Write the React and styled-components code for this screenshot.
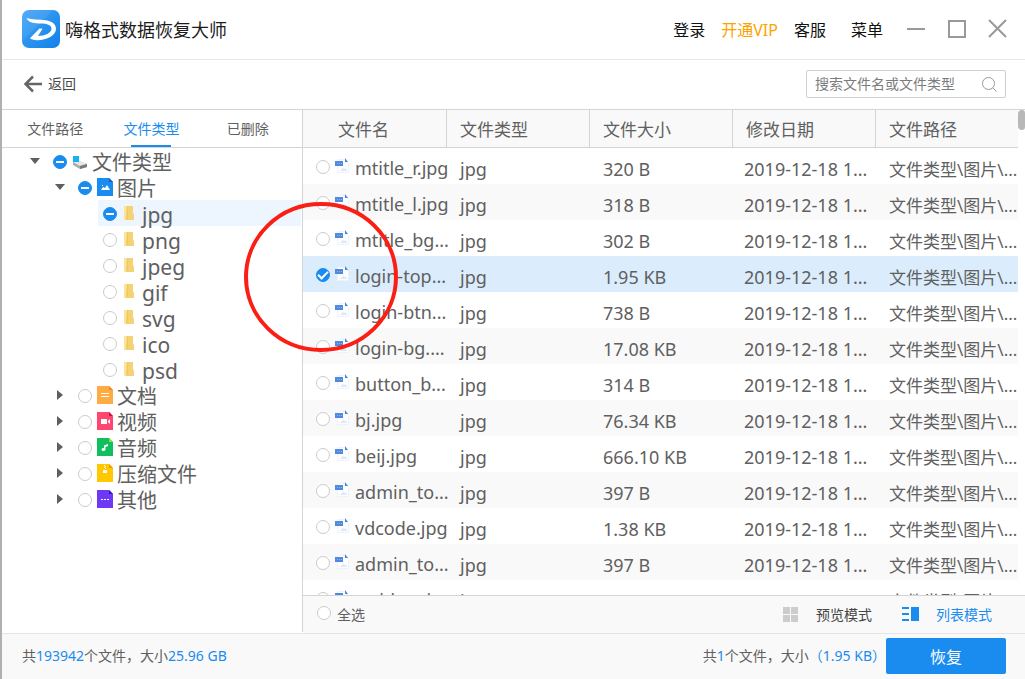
import React, { useEffect, useRef, useState } from "react";
import styled, { createGlobalStyle, css } from "styled-components";

const BLUE = "#1a8cf0";
const LINE = "#d4d4d4";

const GlobalStyle = createGlobalStyle`
  * { box-sizing: border-box; }
  body {
    margin: 0;
    background: #fff;
    color: #606060;
    font-family: "Noto Sans", "Noto Sans CJK SC", sans-serif;
    font-size: 14px;
  }
  button, input { font: inherit; color: inherit; }
  button { padding: 0; border: 0; background: none; cursor: pointer; }
  ul { list-style: none; margin: 0; padding: 0; }
`;

const Window = styled.div`
  position: relative;
  display: flex;
  flex-direction: column;
  height: 100vh;
  border-left: 2px solid #b0b0b0;
  overflow: hidden;
`;

const TitleBar = styled.header`
  display: flex;
  align-items: center;
  flex: none;
  height: 60px;
  padding: 0 17px 1px 20px;
  border-bottom: 1px solid #e6e6e6;
`;

const AppName = styled.h1`
  flex: 1;
  margin: 0 0 0 5px;
  padding-top: 1px;
  color: #1c1c1c;
  font-size: 18px;
  font-weight: 400;
  line-height: 24px;
`;

const MainNav = styled.nav`
  display: flex;
  gap: 16px;
  margin-right: 23px;
  padding-top: 1px;
`;

const NavLink = styled.a`
  color: ${(p) => (p.$vip ? "#ffa200" : "#111")};
  font-size: 16px;
  line-height: 24px;
  text-decoration: none;
  &:last-child { margin-left: 9px; }
`;

const WindowButtons = styled.div`
  display: flex;
  gap: 21px;
`;

const WindowButton = styled.button`
  display: flex;
  width: 20px;
  height: 20px;
`;

const Toolbar = styled.div`
  display: flex;
  align-items: center;
  justify-content: space-between;
  flex: none;
  height: 50px;
  padding: 0 19px 1px 21px;
  border-bottom: 1px solid ${LINE};
`;

const BackButton = styled.button`
  display: flex;
  align-items: center;
  gap: 5px;
  color: #4a4a4a;
  line-height: 20px;
`;

const SearchBox = styled.label`
  display: flex;
  align-items: center;
  width: 200px;
  height: 28px;
  padding: 0 8px;
  border: 1px solid #cfcfcf;
  border-radius: 2px;
`;

const SearchInput = styled.input`
  flex: 1;
  min-width: 0;
  padding: 0;
  border: 0;
  outline: 0;
  background: none;
  line-height: 20px;
  &::placeholder { color: #7c7c7c; opacity: 1; }
`;

const Body = styled.div`
  display: flex;
  flex: 1;
  min-height: 0;
`;

const Sidebar = styled.aside`
  flex: none;
  width: 301px;
  border-right: 1px solid ${LINE};
  margin-bottom: 1px;
`;

const Tabs = styled.div`
  display: flex;
  height: 38px;
  padding: 0 6px 0 5px;
  border-bottom: 1px solid ${LINE};
`;

const Tab = styled.button`
  display: flex;
  flex-direction: column;
  align-items: center;
  justify-content: space-between;
  flex: 1;
  padding-top: 8px;
  line-height: 22px;
  color: ${(p) => (p.$active ? BLUE : "inherit")};
  &::after {
    content: "";
    width: 40px;
    height: 2px;
    background: ${(p) => (p.$active ? BLUE : "transparent")};
  }
`;

const TreeRow = styled.div`
  display: flex;
  align-items: center;
  height: 26px;
  margin-left: ${(p) => p.$indent}px;
  margin-right: 1px;
  background: ${(p) => (p.$active ? "#edf6fe" : "transparent")};
`;

const Toggle = styled.button`
  display: flex;
  justify-content: center;
  width: 16px;
  margin-right: 5px;
`;

const TreeLabel = styled.label`
  display: flex;
  align-items: center;
  height: 26px;
  padding-top: 2px;
  padding-left: 5px;
`;

const TreeIcon = styled.span`
  display: flex;
  justify-content: center;
  width: 16px;
  margin: 0 4px 2px 5px;
`;

const TreeText = styled.span`
  padding-top: 2px;
  font-size: ${(p) => (p.$leaf ? 21 : 20)}px;
  line-height: 26px;
`;

const markFilled = css`
  border-color: ${BLUE};
  background: ${BLUE};
`;

const Check = styled.input`
  appearance: none;
  display: flex;
  align-items: center;
  justify-content: center;
  flex: none;
  width: 14px;
  height: 14px;
  margin: 0;
  border: 1px solid #cbcbcb;
  border-radius: 50%;
  background: #fff;
  &:checked, &:indeterminate { ${markFilled} }
  &:indeterminate::before {
    content: "";
    width: 8px;
    height: 2px;
    background: #fff;
  }
  &:checked:not(:indeterminate)::before {
    content: "";
    width: 8px;
    height: 4px;
    margin-bottom: 2px;
    border: solid #fff;
    border-width: 0 0 2px 2px;
    transform: rotate(-45deg);
  }
`;

const Content = styled.main`
  display: flex;
  flex-direction: column;
  flex: 1;
  min-width: 0;
`;

const TableArea = styled.div`
  display: flex;
  flex: 1;
  min-height: 0;
  overflow: hidden;
`;

const FileTable = styled.table`
  flex: 1;
  align-self: flex-start;
  table-layout: fixed;
  width: 100%;
  border-spacing: 0;
`;

const HeadCell = styled.th`
  height: 38px;
  padding: 2px 0 0 13px;
  border-left: 1px solid ${LINE};
  border-bottom: 1px solid ${LINE};
  background: #f9f9f9;
  font-size: 17px;
  font-weight: 400;
  line-height: 24px;
  text-align: left;
  white-space: nowrap;
  &:first-child { border-left: 0; padding-left: 35px; }
`;

const FileRow = styled.tr`
  height: 36px;
  background: ${(p) => (p.$selected ? "#dbedfc" : "#fff")};
  &:nth-child(even) { background: ${(p) => (p.$selected ? "#dbedfc" : "#f9f9f9")}; }
`;

const Cell = styled.td`
  height: 36px;
  padding: ${(p) => (p.$cjk ? 8 : 6)}px 0 0 ${(p) => p.$inset || 14}px;
  font-size: ${(p) => (p.$cjk ? 17 : 18)}px;
  line-height: 26px;
  white-space: nowrap;
`;

const NameCell = styled.td`
  padding: 0 0 0 13px;
`;

const NameLabel = styled.label`
  display: flex;
  align-items: center;
  height: 36px;
  padding-top: 2px;
  font-size: 18px;
  white-space: nowrap;
`;

const NameIcon = styled.span`
  display: flex;
  margin: 0 5px 2px 5px;
`;

const NameText = styled.span`
  padding-top: 2px;
  line-height: 26px;
`;

const ScrollTrack = styled.div`
  flex: none;
  width: 7px;
`;

const ScrollThumb = styled.div`
  height: 20px;
  border-radius: 4px 3px 3px 4px;
  background: #b8b8b8;
`;

const SelectBar = styled.div`
  display: flex;
  align-items: center;
  flex: none;
  height: 38px;
  padding: 0 33px 0 14px;
  border-top: 1px solid ${LINE};
  background: #f9f9f9;
`;

const SelectAll = styled.label`
  display: flex;
  align-items: center;
  gap: 6px;
  flex: 1;
  line-height: 22px;
  & > input { margin-bottom: 3px; }
`;

const ModeButton = styled.button`
  display: flex;
  align-items: center;
  gap: 17px;
  margin-left: 30px;
  line-height: 22px;
  color: ${(p) => (p.$active ? BLUE : "#444")};
`;

const Footer = styled.footer`
  display: flex;
  align-items: center;
  flex: none;
  height: 46px;
  padding: 0 19px 1px 20px;
  border-top: 1px solid #e4e4e4;
  background: #f9f9f9;
`;

const Summary = styled.p`
  flex: ${(p) => (p.$grow ? 1 : "none")};
  margin: 0;
  line-height: 22px;
`;

const Num = styled.span`
  color: ${BLUE};
`;

const RecoverButton = styled.button`
  width: 120px;
  height: 36px;
  border-radius: 2px;
  background: ${BLUE};
  color: #fff;
  font-size: 16px;
`;

const Marker = styled.svg`
  position: absolute;
  left: 242px;
  top: 201px;
  pointer-events: none;
`;

const Logo = () => (
  <svg width="38" height="38" viewBox="0 0 38 38" aria-hidden="true">
    <defs>
      <linearGradient id="logo" x1="0" y1="0" x2="1" y2="1">
        <stop offset="0" stopColor="#45a5f5" />
        <stop offset="1" stopColor="#0f80ea" />
      </linearGradient>
    </defs>
    <rect width="38" height="38" rx="7" fill="url(#logo)" />
    <path d="M0 31 31 0H7a7 7 0 0 0-7 7Z" fill="#fff" opacity=".08" />
    <path
      d="M4.500 8C10 9.800 17 9.300 24 10.200C30.500 11.200 34 14.500 34 18.800C34 25.500 25 30.300 15 30.200C11.500 30 8.800 29.200 8 28.300L17.500 18.500L20.500 18.800L16 26C23 26 29.500 23 29.500 18.500C29.500 15 25 13.400 19 13.400C14 13.400 6.500 13.500 4.500 8Z"
      fill="#fff"
    />
  </svg>
);

const Caret = ({ open }) => (
  <svg width="12" height="12" viewBox="0 0 12 12" aria-hidden="true">
    <path d={open ? "M1 3h10L6 9Z" : "M3 1v10l6-5Z"} fill="#5f5f5f" />
  </svg>
);

const Drive = () => (
  <svg width="16" height="16" viewBox="0 0 16 16" aria-hidden="true">
    <path d="m1 9 6-1 8 3v3l-7 2-7-4Z" fill="#a9abad" />
    <path d="m1 9 6-1 8 3-7 2Z" fill="#e4e6e8" />
    <path d="m8 13 7-2v3l-7 2Z" fill="#77797b" />
    <rect x="1" y="3" width="6" height="6" fill="#14b4ee" />
  </svg>
);

const Folder = () => (
  <svg width="12" height="16" viewBox="0 0 12 16" aria-hidden="true">
    <path d="M0 1h3v14H0Z" fill="#fbe39a" />
    <path d="M3 1h6v7l1 2v5H2l1-2Z" fill="#f5d273" />
    <path d="M3 1h1v12l-2 2Z" fill="#f0c860" />
  </svg>
);

const glyphs = {
  image: <path d="m4 12 2-3 2 1 2-3 3 5ZM5 7h1v1H5Z" fill="#fff" />,
  doc: <path d="M4 7h8v1H4Zm0 3h8v1H4Z" fill="#fff" />,
  video: <path d="M4 7h6v5H4Zm7 2 2-2v5l-2-2Z" fill="#fff" />,
  audio: <path d="M7 7.500 11 6v2L8.500 9v2.500A2 1.500 0 1 1 7 10Z" fill="#fff" />,
  zip: <path d="M7 1h1v1H7Zm1 1h1v1H8ZM7 3h1v1H7Zm1 1h1v1H8ZM6 6h4v3H6Z" fill="#fff" />,
  other: <path d="M4 9h2v1H4Zm3 0h2v1H7Zm3 0h2v1h-2Z" fill="#fff" />,
};

const TypeIcon = ({ kind, color, fold }) => (
  <svg width="16" height="18" viewBox="0 0 16 18" aria-hidden="true">
    <path d="M0 0h12l4 4v14H0Z" fill={color} />
    <path d="M12 0v4h4Z" fill={fold} />
    {glyphs[kind]}
  </svg>
);

const JpgIcon = () => (
  <svg width="15" height="18" viewBox="0 0 15 18" aria-hidden="true">
    <path d="M2.500 2.500h7l4 4v9h-11Z" fill="#fdfeff" stroke="#eef3fa" />
    <path d="M10 1v4h3Z" fill="#4a86e0" />
    <path d="M5 14l3-3 2 1 1-1 1 3Z" fill="#dce9fa" />
    <rect x="0" y="4" width="8" height="5" fill="#5089e0" />
    <path d="M2 6h1v1H2Zm2 0h1v1H4Zm2 0h1v1H6Z" fill="#8fb2ee" />
  </svg>
);

function TriCheck({ state, ...rest }) {
  const ref = useRef(null);
  useEffect(() => {
    ref.current.indeterminate = state === "some";
  }, [state]);
  return <Check ref={ref} type="checkbox" defaultChecked={state === "all"} {...rest} />;
}

const formats = ["jpg", "png", "jpeg", "gif", "svg", "ico", "psd"];

const categories = [
  { name: "文档", kind: "doc", color: "#ffab44", fold: "#f08a1c" },
  { name: "视频", kind: "video", color: "#ff4570", fold: "#c8104a" },
  { name: "音频", kind: "audio", color: "#10c060", fold: "#8ae02c" },
  { name: "压缩文件", kind: "zip", color: "#ffc800", fold: "#f09a00" },
  { name: "其他", kind: "other", color: "#6e38f4", fold: "#3c10b8" },
];

const files = [
  ["mtitle_r.jpg", "320 B"],
  ["mtitle_l.jpg", "318 B"],
  ["mtitle_bg...", "302 B"],
  ["login-top...", "1.95 KB"],
  ["login-btn...", "738 B"],
  ["login-bg....", "17.08 KB"],
  ["button_b...", "314 B"],
  ["bj.jpg", "76.34 KB"],
  ["beij.jpg", "666.10 KB"],
  ["admin_to...", "397 B"],
  ["vdcode.jpg", "1.38 KB"],
  ["admin_to...", "397 B"],
  ["weidenei...", "397 B"],
];

const columns = ["文件名", "文件类型", "文件大小", "修改日期", "文件路径"];

function TreeItem({ indent, open, toggle, state, icon, text, leaf, active }) {
  return (
    <TreeRow $indent={indent} $active={active}>
      {toggle && (
        <Toggle type="button" aria-label={`${open ? "收起" : "展开"}${text}`}>
          <Caret open={open} />
        </Toggle>
      )}
      <TreeLabel>
        <TriCheck state={state} />
        <TreeIcon>{icon}</TreeIcon>
        <TreeText $leaf={leaf}>{text}</TreeText>
      </TreeLabel>
    </TreeRow>
  );
}

export default function App() {
  const [selected, setSelected] = useState(() => new Set([3]));
  const flip = (i) =>
    setSelected((prev) => {
      const next = new Set(prev);
      next.has(i) ? next.delete(i) : next.add(i);
      return next;
    });

  return (
    <Window>
      <GlobalStyle />
      <TitleBar>
        <Logo />
        <AppName>嗨格式数据恢复大师</AppName>
        <MainNav>
          <NavLink href="#login">登录</NavLink>
          <NavLink href="#vip" $vip>开通VIP</NavLink>
          <NavLink href="#service">客服</NavLink>
          <NavLink href="#menu">菜单</NavLink>
        </MainNav>
        <WindowButtons>
          <WindowButton type="button" aria-label="最小化">
            <svg width="20" height="20"><path d="M1 10h18" stroke="#999" strokeWidth="2" /></svg>
          </WindowButton>
          <WindowButton type="button" aria-label="最大化">
            <svg width="20" height="20"><path d="M2 2h16v16H2Z" fill="none" stroke="#999" strokeWidth="2" /></svg>
          </WindowButton>
          <WindowButton type="button" aria-label="关闭">
            <svg width="20" height="20"><path d="m1 1 17 17M18 1 1 18" stroke="#999" strokeWidth="2" /></svg>
          </WindowButton>
        </WindowButtons>
      </TitleBar>

      <Toolbar>
        <BackButton type="button">
          <svg width="20" height="18" viewBox="0 0 20 18" aria-hidden="true">
            <path d="M19 9H3M10 1.500 2.500 9l7.500 7.500" fill="none" stroke="#666" strokeWidth="2.500" />
          </svg>
          返回
        </BackButton>
        <SearchBox>
          <SearchInput type="text" placeholder="搜索文件名或文件类型" aria-label="搜索" />
          <svg width="15" height="15" viewBox="0 0 15 15" aria-hidden="true">
            <circle cx="6.500" cy="6.500" r="6" fill="none" stroke="#999" />
            <path d="m11 11 3.500 3.500" stroke="#999" />
          </svg>
        </SearchBox>
      </Toolbar>

      <Body>
        <Sidebar>
          <Tabs>
            <Tab type="button">文件路径</Tab>
            <Tab type="button" $active>文件类型</Tab>
            <Tab type="button">已删除</Tab>
          </Tabs>
          <ul>
            <li>
              <TreeItem indent={25} toggle open state="some" icon={<Drive />} text="文件类型" />
              <ul>
                <li>
                  <TreeItem
                    indent={50}
                    toggle
                    open
                    state="some"
                    icon={<TypeIcon kind="image" color={BLUE} fold="#0f62b8" />}
                    text="图片"
                  />
                  <ul>
                    {formats.map((name, i) => (
                      <li key={name}>
                        <TreeItem
                          indent={96}
                          leaf
                          active={i === 0}
                          state={i === 0 ? "some" : "none"}
                          icon={<Folder />}
                          text={name}
                        />
                      </li>
                    ))}
                  </ul>
                </li>
                {categories.map((c) => (
                  <li key={c.name}>
                    <TreeItem indent={50} toggle state="none" icon={<TypeIcon {...c} />} text={c.name} />
                  </li>
                ))}
              </ul>
            </li>
          </ul>
        </Sidebar>

        <Content>
          <TableArea>
            <FileTable>
              <thead>
                <tr>
                  {columns.map((c) => (
                    <HeadCell key={c} scope="col">{c}</HeadCell>
                  ))}
                </tr>
              </thead>
              <tbody>
                {files.map(([name, size], i) => (
                  <FileRow key={i} $selected={selected.has(i)}>
                    <NameCell>
                      <NameLabel>
                        <Check type="checkbox" checked={selected.has(i)} onChange={() => flip(i)} />
                        <NameIcon><JpgIcon /></NameIcon>
                        <NameText>{name}</NameText>
                      </NameLabel>
                    </NameCell>
                    <Cell>jpg</Cell>
                    <Cell>{size}</Cell>
                    <Cell $inset={12}>2019-12-18 1...</Cell>
                    <Cell $cjk>文件类型\图片\...</Cell>
                  </FileRow>
                ))}
              </tbody>
            </FileTable>
            <ScrollTrack><ScrollThumb /></ScrollTrack>
          </TableArea>
          <SelectBar>
            <SelectAll>
              <Check type="checkbox" />
              全选
            </SelectAll>
            <ModeButton type="button">
              <svg width="16" height="16" aria-hidden="true">
                <path d="M0 0h7v7H0ZM8 0h7v7H8ZM0 8h7v7H0ZM8 8h7v7H8Z" fill="#ccc" />
              </svg>
              预览模式
            </ModeButton>
            <ModeButton type="button" $active>
              <svg width="17" height="16" aria-hidden="true">
                <path d="M0 0h7v2H0ZM0 6h7v2H0ZM0 12h7v2H0ZM9 0h8v14H9Z" fill={BLUE} />
              </svg>
              列表模式
            </ModeButton>
          </SelectBar>
        </Content>
      </Body>

      <Footer>
        <Summary $grow>
          共<Num>193942</Num>个文件，大小<Num>25.96 GB</Num>
        </Summary>
        <Summary>
          共<Num>1</Num>个文件，大小<Num>（1.95 KB）</Num>
        </Summary>
        <RecoverButton type="button">恢复</RecoverButton>
      </Footer>

      <Marker width="154" height="152" viewBox="0 0 154 152" aria-hidden="true">
        <ellipse cx="77" cy="76" rx="75" ry="73" fill="none" stroke="#fb1e14" strokeWidth="4" />
      </Marker>
    </Window>
  );
}
